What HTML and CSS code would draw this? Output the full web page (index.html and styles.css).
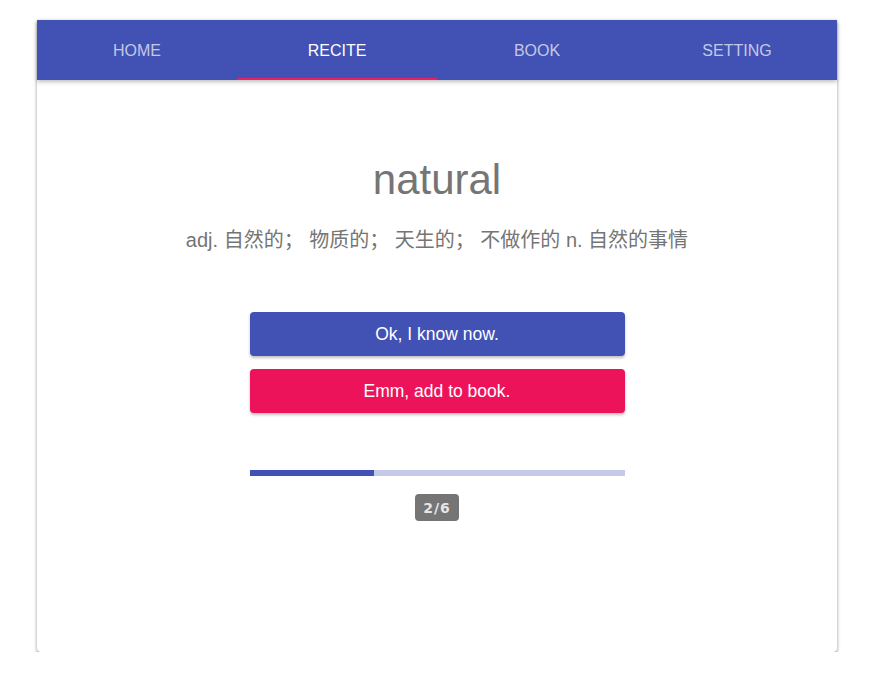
FILE: index.html
```html
<!DOCTYPE html>
<html lang="en">
<head>
<meta charset="utf-8">
<title>Recite</title>
<link rel="stylesheet" href="styles.css">
</head>
<body>
<div class="card">
  <nav class="tabs">
    <div class="tab">HOME</div>
    <div class="tab active">RECITE</div>
    <div class="tab">BOOK</div>
    <div class="tab">SETTING</div>
  </nav>
  <main class="content">
    <h1 class="word">natural</h1>
    <p class="meaning">adj. 自然的； 物质的； 天生的； 不做作的 n. 自然的事情</p>
    <div class="actions">
      <button class="btn btn-primary">Ok, I know now.</button>
      <button class="btn btn-accent">Emm, add to book.</button>
    </div>
    <div class="progress"><div class="progress-fill" style="width: 33.333%"></div></div>
    <div class="badge">2/6</div>
  </main>
</div>
</body>
</html>
```

FILE: styles.css
```css
* { box-sizing: border-box; }
html, body { margin: 0; padding: 0; background: #fff; }
body {
  padding: 20px 0 0 37px;
  font-family: "Liberation Sans", Arial, "Noto Sans CJK SC", sans-serif;
}
.card {
  width: 800px;
  height: 632px;
  background: #fff;
  border-radius: 0 0 4px 4px;
  box-shadow: 0 2px 3px rgba(0,0,0,0.35), 0 1px 5px rgba(0,0,0,0.12);
  display: flex;
  flex-direction: column;
}
.tabs {
  height: 60px;
  background: #4251b4;
  display: flex;
  box-shadow: 0 2px 4px rgba(0,0,0,0.25);
  position: relative;
  z-index: 1;
}
.tab {
  flex: 1;
  display: flex;
  align-items: center;
  justify-content: center;
  color: rgba(255,255,255,0.7);
  font-size: 16px;
  border-bottom: 2px solid transparent;
  padding-top: 4px;
}
.tab.active {
  color: #fff;
  border-bottom-color: #e91e63;
}
.content {
  display: flex;
  flex-direction: column;
  align-items: center;
  padding-top: 75px;
}
.word {
  margin: 0;
  font-weight: normal;
  font-size: 42px;
  line-height: 50px;
  color: #757575;
}
.meaning {
  margin: 22px 0 0;
  font-size: 20px;
  line-height: 26px;
  color: #757575;
}
.actions {
  margin-top: 59px;
  width: 375px;
  display: flex;
  flex-direction: column;
  gap: 13px;
}
.btn {
  height: 44px;
  border: none;
  border-radius: 4px;
  color: #fff;
  font-family: "Liberation Sans", Arial, sans-serif;
  font-size: 17.5px;
  box-shadow: 0 2px 3px rgba(0,0,0,0.25);
  cursor: pointer;
}
.btn-primary { background: #4251b4; }
.btn-accent { background: #ec135a; }
.progress {
  margin-top: 57px;
  width: 375px;
  height: 6px;
  background: #c5cae9;
}
.progress-fill {
  height: 100%;
  background: #4251b4;
}
.badge {
  margin-top: 18px;
  width: 44px;
  height: 27px;
  border-radius: 4px;
  background: #757575;
  color: #e6e6e6;
  font-family: "DejaVu Sans", sans-serif;
  font-weight: bold;
  font-size: 14px;
  letter-spacing: 1px;
  display: flex;
  align-items: center;
  justify-content: center;
}
```
